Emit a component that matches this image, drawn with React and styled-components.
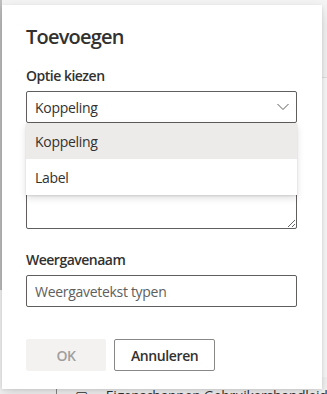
import React from 'react'
import styled, { createGlobalStyle } from 'styled-components'

const GlobalStyle = createGlobalStyle`
  html, body { margin: 0; padding: 0; }
  body {
    font-family: "Open Sans", "Noto Sans", sans-serif;
    color: #323130;
    background: #f4f4f4;
  }
  * { box-sizing: border-box; }
`

const Page = styled.div`
  position: relative;
  width: 327px;
  height: 394px;
  overflow: hidden;
  display: flex;
  background: #f4f4f4;
`

const LeftRail = styled.div`
  width: 2px;
  height: 290px;
  flex-shrink: 0;
  background: #bdbdbd;
`

const RightRail = styled.div`
  flex: 1;
  margin-top: 77px;
  height: 300px;
  border-top: 1px solid #e1e1e1;
  background: #fafafa;
`

const BehindText = styled.div`
  position: absolute;
  left: 56px;
  top: 386px;
  display: flex;
  align-items: flex-start;
  gap: 18px;
  font-size: 14px;
  line-height: 20px;
  letter-spacing: -0.3px;
  color: #323130;
  white-space: nowrap;
  border-left: 1px solid #8a8886;
  padding-left: 18px;
`

const Dialog = styled.div`
  position: relative;
  z-index: 1;
  margin-top: 5px;
  width: 320px;
  height: 384px;
  flex-shrink: 0;
  background: #fff;
  box-shadow: 0 6.4px 14.4px rgba(0, 0, 0, 0.132), 0 1.2px 3.6px rgba(0, 0, 0, 0.108);
  padding: 18px 25px 18px 24px;
  display: flex;
  flex-direction: column;
`

const Title = styled.h1`
  margin: 0 0 10px;
  font-size: 20px;
  line-height: 28px;
  font-weight: 600;
  letter-spacing: -0.8px;
  color: #323130;
`

const Label = styled.label`
  display: block;
  padding: 5px 0;
  font-size: 14px;
  line-height: 20px;
  font-weight: 600;
  letter-spacing: -0.5px;
  color: #323130;
`

const Field = styled.div`
  position: relative;
  margin-top: ${p => p.$gap || 0}px;
`

const Select = styled.div`
  height: 32px;
  border: 1px solid #605e5c;
  border-radius: 2px;
  padding: 0 28px 0 8px;
  display: flex;
  align-items: center;
  justify-content: space-between;
  font-size: 14px;
  letter-spacing: -0.3px;
  color: #323130;
  position: relative;
`

const Chevron = styled.svg`
  position: absolute;
  right: 7px;
  top: 11px;
  width: 12px;
  height: 8px;
`

const Menu = styled.div`
  position: absolute;
  z-index: 2;
  left: 0;
  right: 0;
  top: 32px;
  background: #fff;
  box-shadow: 0 3.2px 7.2px rgba(0, 0, 0, 0.132), 0 0.6px 1.8px rgba(0, 0, 0, 0.108);
`

const MenuItem = styled.div`
  height: 36px;
  display: flex;
  align-items: center;
  padding: 0 9px;
  font-size: 14px;
  letter-spacing: -0.3px;
  color: #323130;
  background: ${p => (p.$selected ? '#edebe9' : '#fff')};
`

const TextArea = styled.textarea`
  display: block;
  width: 100%;
  height: 92px;
  margin-top: 14px;
  border: 1px solid #605e5c;
  border-radius: 2px;
  resize: vertical;
  font-family: inherit;
  font-size: 14px;
  padding: 6px 8px;
`

const Input = styled.input`
  display: block;
  width: 100%;
  height: 32px;
  border: 1px solid #605e5c;
  border-radius: 2px;
  padding: 0 8px;
  font-family: inherit;
  font-size: 14px;
  letter-spacing: -0.3px;
  color: #323130;
  &::placeholder { color: #605e5c; }
`

const Footer = styled.div`
  display: flex;
  gap: 8px;
  margin-top: 32px;
`

const Button = styled.button`
  height: 32px;
  min-width: 80px;
  padding: 0 16px;
  border-radius: 2px;
  font-family: inherit;
  font-size: 14px;
  font-weight: 600;
  letter-spacing: -0.4px;
  border: 1px solid ${p => (p.$disabled ? '#f3f2f1' : '#8a8886')};
  background: ${p => (p.$disabled ? '#f3f2f1' : '#fff')};
  color: ${p => (p.$disabled ? '#a19f9d' : '#323130')};
`

export default function App() {
  return (
    <>
      <GlobalStyle />
      <Page>
        <LeftRail />
        <Dialog>
          <Title>Toevoegen</Title>
          <Label>Optie kiezen</Label>
          <Field>
            <Select>
              <span>Koppeling</span>
              <Chevron viewBox="0 0 12 8">
                <path d="M0.5 1 L6 6.5 L11.5 1" fill="none" stroke="#605e5c" strokeWidth="1" />
              </Chevron>
            </Select>
            <Menu>
              <MenuItem $selected>Koppeling</MenuItem>
              <MenuItem>Label</MenuItem>
            </Menu>
          </Field>
          <TextArea />
          <Field $gap={16}>
            <Label>Weergavenaam</Label>
            <Input placeholder="Weergavetekst typen" />
          </Field>
          <Footer>
            <Button $disabled>OK</Button>
            <Button>Annuleren</Button>
          </Footer>
        </Dialog>
        <RightRail />
        <BehindText>
          <span>▢</span>
          <span>Eigenschappen Gebruikershandleiding O</span>
        </BehindText>
      </Page>
    </>
  )
}
